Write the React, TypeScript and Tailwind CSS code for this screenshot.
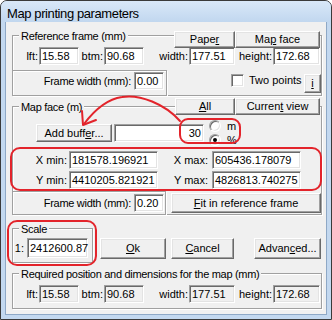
import type { ReactNode } from 'react';

const sunken =
  'border border-t-[#a0a0a0] border-l-[#a0a0a0] border-b-white border-r-white shadow-[inset_1px_1px_0_#696969,inset_-1px_-1px_0_#e3e3e3]';
const raised =
  'border border-t-white border-l-white border-b-[#696969] border-r-[#696969] shadow-[inset_-1px_-1px_0_#a0a0a0,inset_1px_1px_0_#e3e3e3]';
const etched = 'border border-[#a0a0a0] shadow-[inset_1px_1px_0_#fff,1px_1px_0_#fff]';

function Field({ className = '', children, disabled = false }: { className?: string; children?: ReactNode; disabled?: boolean }) {
  return (
    <div className={`flex items-center px-[2px] text-[11px] leading-none ${sunken} ${disabled ? 'bg-[#f0f0f0]' : 'bg-white'} ${className}`}>
      {children}
    </div>
  );
}

function Btn({ className = '', children }: { className?: string; children: ReactNode }) {
  return (
    <div className={`flex items-center justify-center bg-[#f0f0f0] text-[11px] leading-none ${raised} ${className}`}>
      {children}
    </div>
  );
}

function Group({ className = '', legend, children }: { className?: string; legend: string; children?: ReactNode }) {
  return (
    <div className={`relative ${etched} ${className}`}>
      <span className="absolute -top-[6px] left-[6px] px-[2px] bg-[#f0f0f0] text-[11px] leading-[13px] tracking-[-0.3px]">{legend}</span>
      {children}
    </div>
  );
}

function Radio({ checked = false }: { checked?: boolean }) {
  return (
    <div className={`w-[12px] h-[12px] rounded-full bg-white flex items-center justify-center ${sunken}`}>
      {checked && <div className="w-[4px] h-[4px] rounded-full bg-black" />}
    </div>
  );
}

function DimRow({ disabled = false }: { disabled?: boolean }) {
  return (
    <div className="flex items-center mt-[11px] text-[11px]">
      <span className="w-[26px] text-right pr-[1px]">lft:</span>
      <Field className="w-[40px] h-[18px]" disabled={disabled}>15.58</Field>
      <span className="w-[25px] text-right pr-[1px]">btm:</span>
      <Field className="w-[40px] h-[18px]" disabled={disabled}>90.68</Field>
      <span className="w-[45px] text-right pr-[1px]">width:</span>
      <Field className="w-[46px] h-[18px]" disabled={disabled}>177.51</Field>
      <span className="w-[38px] text-right pr-[1px]">height:</span>
      <Field className="w-[47px] h-[18px]" disabled={disabled}>172.68</Field>
    </div>
  );
}

function FrameWidth({ className, value }: { className: string; value: string }) {
  return (
    <div className={`flex items-start justify-end bg-[#f0f0f0] ${etched} ${className}`}>
      <span className="h-[18px] flex items-center pr-[3px] text-[11px] tracking-[-0.3px]">Frame width (mm):</span>
      <Field className="w-[30px] h-[18px]">{value}</Field>
    </div>
  );
}

export default function App() {
  return (
    <div className="relative w-[332px] h-[320px] font-['Liberation_Sans',Arial,sans-serif] text-black">
      <div className="w-[332px] h-[320px] flex flex-col bg-[#c3d8ef] border border-[#3a3a3a] rounded-t-[7px] overflow-hidden">
        <div className="h-[21px] pl-[6px] pt-[5px] bg-linear-to-b from-[#d9e8f8] to-[#c1d7ef] text-[13px] leading-[15px] tracking-[-0.4px]">
          Map printing parameters
        </div>
        <div className="ml-[4px] w-[322px] h-[293px] flex flex-col bg-[#f0f0f0] border-l border-r border-b border-[#8ea8c6] pl-[6px] pr-[4px] pt-[13px]">
          <Group className="h-[61px] flex flex-col" legend="Reference frame (mm)">
            <div className="absolute -top-[5px] right-[1px] flex">
              <Btn className="w-[61px] h-[17px]">
                Pape<span className="underline">r</span>
              </Btn>
              <Btn className="w-[85px] h-[17px]">
                Ma<span className="underline">p</span>&nbsp;face
              </Btn>
            </div>
            <DimRow />
            <div className="mt-auto -ml-px -mb-px flex items-start">
              <FrameWidth className="w-[155px] h-[26px] pt-[1px] pr-[2px]" value="0.00" />
              <div className={`ml-[64px] mt-[4px] w-[13px] h-[13px] bg-white ${sunken}`} />
              <span className="ml-[5px] mt-[4px] text-[11px] leading-[13px]">Two points</span>
              <Btn className="ml-auto mt-[4px] w-[17px] h-[19px]">
                <span className="underline">i</span>
              </Btn>
            </div>
          </Group>

          <Group className="mt-[10px] h-[109px] flex flex-col" legend="Map face (m)">
            <div className="absolute -top-[9px] right-[1px] flex">
              <Btn className="w-[60px] h-[17px]">
                <span className="underline">A</span>ll
              </Btn>
              <Btn className="w-[85px] h-[17px]">
                Curren<span className="underline">t</span>&nbsp;view
              </Btn>
            </div>
            <div className="mt-[13px] h-[26px] flex items-center">
              <Btn className="ml-[23px] w-[76px] h-[18px]">
                Add buff<span className="underline">e</span>r...
              </Btn>
              <Field className="ml-[2px] w-[90px] h-[18px] justify-end">30</Field>
              <div className="ml-[5px] flex flex-col gap-[2px] text-[11px]">
                <div className="flex items-center">
                  <Radio />
                  <span className="ml-[6px] leading-none">m</span>
                </div>
                <div className="flex items-center">
                  <Radio checked />
                  <span className="ml-[6px] leading-none">%</span>
                </div>
              </div>
            </div>
            <div className="mt-[5px] flex items-center text-[11px]">
              <span className="w-[56px] text-right pr-[2px]">X min:</span>
              <Field className="w-[89px] h-[18px]">181578.196921</Field>
              <span className="w-[54px] text-right pr-[4px]">X max:</span>
              <Field className="w-[89px] h-[18px]">605436.178079</Field>
            </div>
            <div className="mt-[2px] flex items-center text-[11px]">
              <span className="w-[56px] text-right pr-[2px]">Y min:</span>
              <Field className="w-[89px] h-[18px]">4410205.821921</Field>
              <span className="w-[54px] text-right pr-[4px]">Y max:</span>
              <Field className="w-[89px] h-[18px]">4826813.740275</Field>
            </div>
            <div className="mt-auto -ml-px -mb-px flex items-start">
              <FrameWidth className="w-[154px] h-[24px] pt-[2px] pr-[1px]" value="0.20" />
              <Btn className="ml-[5px] mt-[2px] w-[150px] h-[20px]">
                <span className="underline">F</span>it in reference frame
              </Btn>
            </div>
          </Group>

          <div className="mt-[13px] flex items-start">
            <Group className="w-[81px] h-[35px]" legend="Scale">
              <div className="mt-[9px] flex items-center text-[11px]">
                <span className="w-[14px] text-right pr-[3px]">1:</span>
                <Field className="w-[61px] h-[20px]">2412600.87</Field>
              </div>
            </Group>
            <Btn className="ml-[7px] mt-[10px] w-[66px] h-[21px]">
              <span className="underline">O</span>k
            </Btn>
            <Btn className="ml-[5px] mt-[10px] w-[63px] h-[21px]">
              <span className="underline">C</span>ancel
            </Btn>
            <Btn className="ml-[20px] mt-[10px] w-[67px] h-[21px]">
              Advan<span className="underline">c</span>ed...
            </Btn>
          </div>

          <Group className="mt-[10px] h-[36px]" legend="Required position and dimensions for the map (mm)">
            <DimRow disabled />
          </Group>
        </div>
      </div>

      <svg className="absolute left-0 top-0 pointer-events-none" width="332" height="320" viewBox="0 0 332 320" fill="none">
        <g stroke="#e3242b" strokeWidth="2" strokeLinecap="round" strokeLinejoin="round">
          <rect x="180" y="119" width="60" height="24" rx="8" />
          <rect x="11" y="148" width="310" height="42" rx="9" />
          <rect x="8" y="221" width="88" height="44" rx="9" />
          <path d="M180 121 C165 104 140 94 122 97 C108 99 96 108 84 124" />
          <path d="M82 111 L83 125 L96 120" />
        </g>
      </svg>
    </div>
  );
}
